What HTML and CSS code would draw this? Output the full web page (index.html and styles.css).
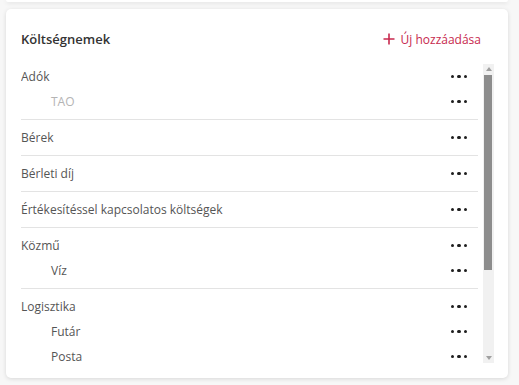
FILE: index.html
```html
<!DOCTYPE html>
<html lang="hu">
<head>
  <meta charset="utf-8" />
  <meta name="viewport" content="width=device-width, initial-scale=1" />
  <title>Költségnemek</title>
  <link rel="stylesheet" href="styles.css">
</head>
<body>
  <div class="page">
    <div class="card card-prev"></div>

    <section class="card categories">
      <header class="card-head">
        <h2 class="card-title">Költségnemek</h2>
        <button class="add-btn" type="button">
          <svg width="12" height="12" viewBox="0 0 12 12" aria-hidden="true">
            <path d="M6 0.5v11M0.5 6h11" stroke="currentColor" stroke-width="1.6" fill="none"/>
          </svg>
          <span>Új hozzáadása</span>
        </button>
      </header>

      <div class="scroller">
        <div class="list">
          <div class="group first">
            <div class="row"><span>Adók</span><button class="more" type="button"><i></i><i></i><i></i></button></div>
            <div class="row sub muted"><span>TAO</span><button class="more" type="button"><i></i><i></i><i></i></button></div>
          </div>
          <div class="group">
            <div class="row"><span>Bérek</span><button class="more" type="button"><i></i><i></i><i></i></button></div>
          </div>
          <div class="group">
            <div class="row"><span>Bérleti díj</span><button class="more" type="button"><i></i><i></i><i></i></button></div>
          </div>
          <div class="group">
            <div class="row"><span>Értékesítéssel kapcsolatos költségek</span><button class="more" type="button"><i></i><i></i><i></i></button></div>
          </div>
          <div class="group">
            <div class="row"><span>Közmű</span><button class="more" type="button"><i></i><i></i><i></i></button></div>
            <div class="row sub"><span>Víz</span><button class="more" type="button"><i></i><i></i><i></i></button></div>
          </div>
          <div class="group">
            <div class="row"><span>Logisztika</span><button class="more" type="button"><i></i><i></i><i></i></button></div>
            <div class="row sub"><span>Futár</span><button class="more" type="button"><i></i><i></i><i></i></button></div>
            <div class="row sub"><span>Posta</span><button class="more" type="button"><i></i><i></i><i></i></button></div>
          </div>
        </div>

        <div class="scrollbar" aria-hidden="true">
          <div class="sb-btn">
            <svg width="6" height="4" viewBox="0 0 6 4"><path d="M0 4L3 0L6 4Z" fill="#a0a0a0"/></svg>
          </div>
          <div class="sb-track"><div class="sb-thumb"></div></div>
          <div class="sb-btn">
            <svg width="6" height="4" viewBox="0 0 6 4"><path d="M0 0L3 4L6 0Z" fill="#a0a0a0"/></svg>
          </div>
        </div>
      </div>
    </section>
  </div>
</body>
</html>
```

FILE: styles.css
```css
:root {
  --bg: #f7f7f7;
  --card: #ffffff;
  --text: #555555;
  --title: #333333;
  --muted: #b4b4b4;
  --accent: #c7294e;
  --line: #e3e3e3;
  --shadow: 0 1px 4px rgba(0, 0, 0, 0.13);
}
* { box-sizing: border-box; }
html, body {
  margin: 0;
  height: 100%;
  background: var(--bg);
  font-family: "Open Sans", "Noto Sans", Arial, sans-serif;
  color: var(--text);
}
.page {
  display: flex;
  flex-direction: column;
  gap: 7px;
  padding: 0 11px 0 6px;
}
.card {
  background: var(--card);
  border-radius: 5px;
  box-shadow: var(--shadow);
}
.card-prev {
  height: 2px;
  border-radius: 0 0 5px 5px;
}
.categories {
  padding: 19px 14px 15px 15px;
}
.card-head {
  display: flex;
  align-items: center;
  justify-content: space-between;
  height: 22px;
  margin-bottom: 14px;
}
.card-title {
  margin: 0;
  font-size: 13px;
  font-weight: 600;
  color: var(--title);
}
.add-btn {
  display: inline-flex;
  align-items: center;
  gap: 6px;
  padding: 0 13px 0 0;
  border: 0;
  background: none;
  font: inherit;
  font-size: 12px;
  color: var(--accent);
  cursor: pointer;
}

.scroller {
  display: flex;
  gap: 5px;
  height: 299px;
}
.list {
  flex: 1;
  min-width: 0;
  overflow: hidden;
}
.scrollbar {
  display: flex;
  flex-direction: column;
  width: 11px;
  background: #f1f1f1;
}
.sb-btn {
  display: grid;
  place-items: center;
  height: 10px;
}
.sb-track {
  flex: 1;
  padding: 1px 2px 0 1px;
}
.sb-thumb {
  height: 195px;
  background: #8d8d8d;
}

.group {
  padding: 5px 0;
  border-bottom: 1px solid var(--line);
}
.group.first { padding-top: 0; }
.row {
  display: flex;
  align-items: center;
  justify-content: space-between;
  height: 25px;
  font-size: 12px;
}
.row.sub span { padding-left: 30px; }
.row.muted span { color: var(--muted); }
.more {
  display: inline-flex;
  gap: 3px;
  margin-right: 11px;
  padding: 0;
  border: 0;
  background: none;
  cursor: pointer;
}
.more i {
  width: 3.5px;
  height: 3.5px;
  border-radius: 50%;
  background: #1e1e1e;
}
```
